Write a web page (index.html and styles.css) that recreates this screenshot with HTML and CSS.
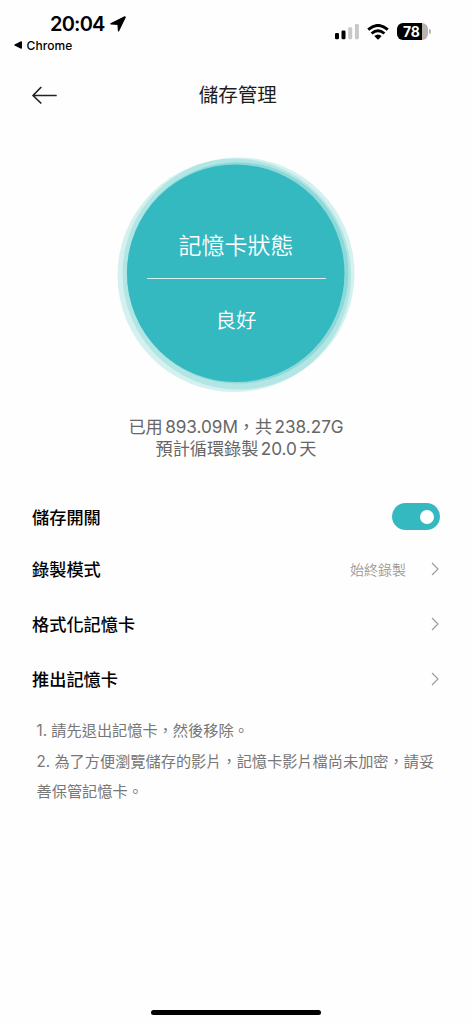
FILE: index.html
```html
<!DOCTYPE html>
<html lang="zh-Hant">
<head>
<meta charset="utf-8">
<title>儲存管理</title>
<link rel="stylesheet" href="styles.css">
</head>
<body>
<div class="screen">
  <header class="status">
    <div class="status-left">
      <div class="clock"><span class="time">20:04</span>
        <svg class="location" width="16" height="16" viewBox="0 0 16 16"><path stroke="#000" stroke-width="1.200" stroke-linejoin="round" d="M14.800.8.8 7.800 8 8.300 8.500 15 15.200 1.200Z"/></svg>
      </div>
      <div class="back-app"><svg width="8" height="8" viewBox="0 0 8 8"><path d="M.6 3.500 7 .2Q8 0 8 1V7Q8 8 7 7.800L.6 4.500Q-.2 4 .6 3.500Z"/></svg><span>Chrome</span></div>
    </div>
    <div class="status-right">
      <svg width="25" height="16" viewBox="0 0 25 16"><rect x="1" y="9" width="4" height="6.300" rx="1.200"/><rect x="7.500" y="6.500" width="4" height="8.800" rx="1.200"/><g fill="#c8c8c8"><rect x="14.200" y="3.200" width="4" height="12.100" rx="1.200"/><rect x="20.900" y="0" width="4" height="15.300" rx="1.200"/></g></svg>
      <svg class="wifi" width="22" height="16" viewBox="0 0 22 16"><g fill="none" stroke="#000" stroke-width="2.900"><path d="M1.200 5.700Q11-2.900 20.800 5.700"/><path d="M4.600 9.500Q11 4.100 17.400 9.500"/></g><path d="M7.300 12Q11 8.900 14.700 12L11.600 15.300Q11 15.900 10.400 15.300Z"/></svg>
      <div class="battery"><span class="level">78</span><i class="cap"></i></div>
    </div>
  </header>
  <nav class="titlebar">
    <svg class="back" width="25" height="18" viewBox="0 0 25 18"><path d="M8.800 1.500 1 9.500l7.800 7.500M1 9.500h23"/></svg>
    <h1>儲存管理</h1>
  </nav>
  <section class="state">
    <svg class="rings" width="240" height="236" viewBox="116 157 240 236">
      <g fill="#2fbdb9" fill-opacity=".2">
        <circle cx="234.300" cy="275.300" r="116.800"/>
        <circle cx="238.500" cy="273.500" r="116"/>
      </g>
      <circle cx="237.700" cy="272.900" r="110.700" fill="#8fd8d8"/>
      <circle cx="235.700" cy="273.300" r="108.800" fill="#34b9c1"/>
    </svg>
    <div class="state-text"><div class="label">記憶卡狀態</div><div class="value">良好</div></div>
  </section>
  <section class="usage"><p>已用 893.09M，共 238.27G</p><p>預計循環錄製 20.0 天</p></section>
  <main class="list">
    <div class="row first"><span>儲存開關</span><span class="toggle"><i></i></span></div>
    <div class="row second"><span>錄製模式</span><span class="mode">始終錄製</span><svg class="chev" width="8" height="14" viewBox="0 0 8 14"><path d="m1 1 6 6-6 6"/></svg></div>
    <div class="row"><span>格式化記憶卡</span><svg class="chev" width="8" height="14" viewBox="0 0 8 14"><path d="m1 1 6 6-6 6"/></svg></div>
    <div class="row"><span>推出記憶卡</span><svg class="chev" width="8" height="14" viewBox="0 0 8 14"><path d="m1 1 6 6-6 6"/></svg></div>
  </main>
  <section class="notes"><p>1. 請先退出記憶卡，然後移除。</p><p>2. 為了方便瀏覽儲存的影片，記憶卡影片檔尚未加密，請妥<br>善保管記憶卡。</p></section>
  <div class="home"></div>
</div>
</body>
</html>
```
FILE: styles.css
```css
* { box-sizing: border-box; }
body { margin: 0; background: #fefefe; font-family: Inter, "Noto Sans CJK TC", sans-serif; color: #000; }
h1, p { margin: 0; font-weight: inherit; }
svg { display: block; flex: none; }
.screen { height: 1024px; width: 472px; display: flex; flex-direction: column; overflow: hidden; }
.status { height: 64px; display: flex; justify-content: space-between; padding: 12px 41px 0 14px; }
.clock { display: flex; align-items: center; height: 24px; padding-left: 36px; gap: 5px; }
.time { font-size: 20px; font-weight: 600; letter-spacing: -.8px; }
.back-app { display: flex; align-items: center; gap: 4.500px; height: 18px; font-size: 12px; font-weight: 500; letter-spacing: .1px; }
.status-right { display: flex; align-items: flex-start; padding-top: 12px; }
.wifi { margin-left: 8px; }
.battery { display: flex; align-items: center; margin: -1px 0 0 8px; }
.level { width: 31px; height: 17px; border-radius: 6px; background: linear-gradient(90deg, #000 25px, #b4b4b4 25px); color: #fff; font-size: 14px; line-height: 17px; font-weight: 700; padding-left: 6px; letter-spacing: -.2px; }
.cap { width: 2px; height: 5px; margin-left: 1px; border-radius: 0 2px 2px 0; background: #b4b4b4; }
.titlebar { height: 62px; display: grid; grid-template-columns: 1fr auto 1fr; align-items: center; padding: 0 28px 0 31.500px; }
.back { fill: none; stroke: #222; stroke-width: 1.700; stroke-linecap: round; stroke-linejoin: round; }
.titlebar h1 { font-size: 19.500px; line-height: 28px; color: #1c1c1c; }
.state { display: grid; width: 240px; height: 236px; margin: 31px 0 0 116px; }
.rings, .state-text { grid-area: 1 / 1; }
.state-text { display: flex; flex-direction: column; align-items: center; color: #fff; z-index: 1; }
.label { width: 179px; height: 122px; padding-top: 72px; border-bottom: 1px solid #d9f0f1; text-align: center; font-size: 23px; line-height: 34px; font-weight: 350; }
.value { margin-top: 26px; font-size: 20.500px; line-height: 32px; font-weight: 350; }
.usage { margin-top: 23px; text-align: center; font-size: 17.200px; line-height: 22px; color: #666; word-spacing: -2.300px; letter-spacing: -.05px; }
.list { margin-top: 29px; padding: 0 32px; font-size: 17.200px; font-weight: 500; }
.row { height: 55px; display: flex; align-items: center; justify-content: space-between; }
.row.first { height: 54px; }
.row.second { height: 51px; margin-bottom: 2px; }
.toggle { width: 48px; height: 27px; border-radius: 14px; background: #34b9c1; padding: 7px 6px; display: flex; justify-content: flex-end; }
.toggle i { width: 14px; height: 14px; border-radius: 50%; background: #fff; }
.mode { margin-left: auto; margin-right: 25px; font-size: 14px; font-weight: 350; color: #999; }
.chev { margin-right: 1px; fill: none; stroke: #999; stroke-width: 1.100; }
.notes { margin-top: 10px; padding-left: 36.500px; font-size: 15.200px; line-height: 30.500px; color: #777; white-space: nowrap; }
.home { width: 170px; height: 5px; border-radius: 3px; background: #000; margin: auto auto 9px 151px; }
```
